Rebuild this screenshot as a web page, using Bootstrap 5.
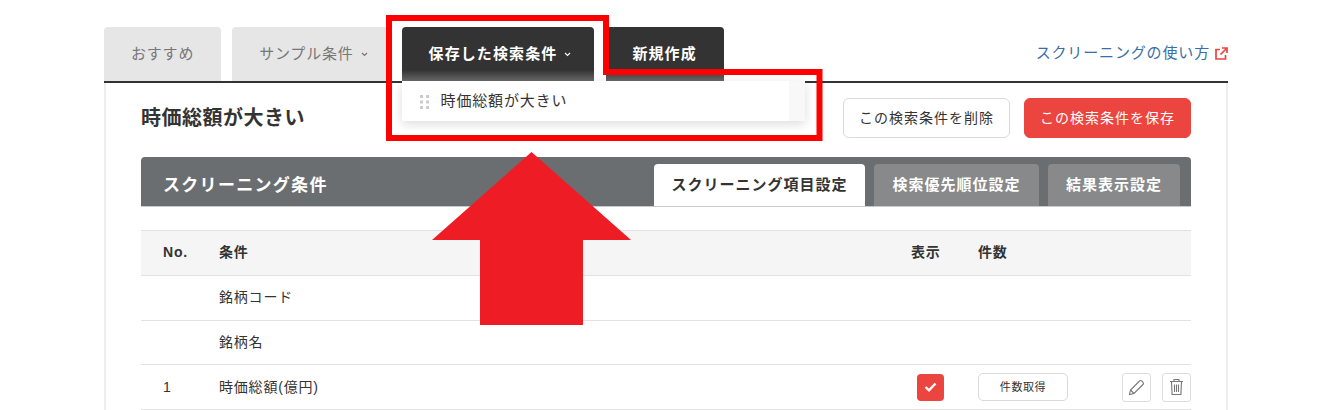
<!DOCTYPE html>
<html lang="ja">

<head>
    <meta charset="UTF-8">
    <meta name="viewport" content="width=device-width, initial-scale=1.0">
    <link href="https://cdn.jsdelivr.net/npm/bootstrap@5.3.3/dist/css/bootstrap.min.css" rel="stylesheet">
    <script src="https://cdn.jsdelivr.net/npm/bootstrap@5.3.3/dist/js/bootstrap.bundle.min.js"></script>
    <title>スクリーニング</title>
    <style>
        html, body {
            height: 410px;
            overflow: hidden;
        }

        body {
            font-family: "Liberation Sans", "Noto Sans CJK JP", sans-serif;
            font-size: 14px;
            color: #333;
            background: #fff;
            position: relative;
        }

        .page-wrap {
            width: 1124px;
            margin-left: 104px;
            padding-top: 27px;
        }

        .main-tabs {
            height: 56px;
            border-bottom: 2px solid #333;
            gap: 11px;
        }

        .main-tab {
            height: 54px;
            padding: 0 27px;
            display: flex;
            align-items: center;
            gap: 7px;
            font-size: 15px;
            letter-spacing: .8px;
            background: #e6e6e6;
            color: #777;
            border-radius: 4px 4px 0 0;
            text-decoration: none;
        }

        .main-tab.has-caret {
            padding-right: 23px;
        }

        .main-tab.is-dark {
            background: linear-gradient(#333 80%, #6a6a6a);
            color: #fff;
            font-weight: 700;
            letter-spacing: 1.100px;
        }

        .main-tab.tab-new {
            margin-left: 1px;
            padding-left: 26px;
        }

        .tab-holder {
            position: relative;
        }

        .saved-menu {
            position: absolute;
            top: 54px;
            left: 0;
            width: 403px;
            height: 40px;
            display: flex;
            z-index: 5;
            background: #f8f8f8;
            box-shadow: 0 3px 10px rgba(0, 0, 0, .14);
        }

        .saved-item {
            width: 387px;
            background: #fff;
            display: flex;
            align-items: center;
            padding: 1px 0 0 18px;
            gap: 12px;
            font-size: 15px;
            letter-spacing: .85px;
        }

        .help-link {
            color: #3a6ea5;
            font-size: 15px;
            letter-spacing: .85px;
            text-decoration: none;
            height: 54px;
            padding-bottom: 1px;
            display: flex;
            align-items: center;
            gap: 4px;
        }

        .content-box {
            border-left: 2px solid #eee;
            border-right: 2px solid #eee;
            height: 327px;
            padding: 15px 35px 0;
        }

        .title-row {
            height: 40px;
            gap: 14px;
        }

        .cond-title {
            font-size: 20px;
            font-weight: 700;
            margin: 0;
            letter-spacing: .5px;
        }

        .act-btn {
            width: 167px;
            height: 40px;
            padding: 0;
            font-size: 14px;
            letter-spacing: 1px;
            border-radius: 6px;
        }

        .btn-outline-del {
            background: #fff;
            border: 1px solid #d9d9d9;
            color: #333;
        }

        .btn-save {
            background: #ec443e;
            border: 1px solid #ec443e;
            color: #fff;
        }

        .cond-bar {
            margin-top: 19px;
            height: 50px;
            background: #6b6e70;
            border-bottom: 1px solid #c9cacb;
            border-radius: 4px 4px 0 0;
            padding: 8px 11px 0 22px;
        }

        .bar-title {
            color: #fff;
            font-size: 17px;
            font-weight: 700;
            letter-spacing: 1.300px;
            margin-bottom: 8px;
        }

        .bar-tabs {
            gap: 9px;
        }

        .bar-tab {
            height: 42px;
            display: flex;
            align-items: center;
            justify-content: center;
            font-size: 15px;
            font-weight: 700;
            letter-spacing: 1px;
            background: #87898b;
            color: #fff;
            border-radius: 4px 4px 0 0;
            text-decoration: none;
        }

        .bar-tab.is-on {
            background: #fff;
            color: #333;
        }

        .cond-table {
            margin: 23px 0 0;
            table-layout: fixed;
            width: 1050px;
            border-top: 1px solid #e2e2e2;
            color: #333;
        }

        .cond-table th,
        .cond-table td {
            height: 44.8px;
            padding: 0;
            vertical-align: middle;
            border-bottom: 1px solid #e2e2e2;
            font-size: 14px;
            letter-spacing: .8px;
        }

        .cond-table th {
            background: #f5f5f5;
            font-weight: 700;
            --bs-table-bg: #f5f5f5;
        }

        .cell-no {
            padding-left: 22px !important;
        }

        .check-box {
            width: 27px;
            height: 27px;
            margin-left: 6px;
            background: #ec443e;
            border-radius: 4px;
            display: flex;
            align-items: center;
            justify-content: center;
        }

        .count-btn {
            width: 90px;
            height: 28px;
            padding: 0;
            font-size: 11px;
            letter-spacing: .6px;
            color: #333;
            background: #fff;
            border: 1px solid #d9d9d9;
            border-radius: 5px;
        }

        .icon-row {
            gap: 11px;
        }

        .icon-btn {
            width: 29px;
            height: 29px;
            padding: 0;
            background: #fff;
            border: 1px solid #ddd;
            border-radius: 3px;
            display: flex;
            align-items: center;
            justify-content: center;
        }

        .mark-layer {
            position: absolute;
            top: 0;
            left: 0;
            z-index: 10;
            pointer-events: none;
        }
    </style>
</head>

<body>
    <div class="page-wrap">
        <div class="main-tabs d-flex align-items-end">
            <a href="#" class="main-tab">おすすめ</a>
            <a href="#" class="main-tab has-caret">サンプル条件
                <svg width="7" height="5" viewBox="0 0 7 5"><path d="M1 1l2.500 2.500L6 1" fill="none" stroke="#777" stroke-width="1.200"/></svg>
            </a>
            <div class="tab-holder">
                <a href="#" class="main-tab is-dark has-caret">保存した検索条件
                    <svg width="7" height="5" viewBox="0 0 7 5"><path d="M1 1l2.500 2.500L6 1" fill="none" stroke="#fff" stroke-width="1.200"/></svg>
                </a>
                <div class="saved-menu">
                    <div class="saved-item">
                        <svg width="9" height="14" viewBox="0 0 9 14" fill="#ccc">
                            <rect x="0" y="0" width="3" height="3"/><rect x="6" y="0" width="3" height="3"/>
                            <rect x="0" y="5.500" width="3" height="3"/><rect x="6" y="5.500" width="3" height="3"/>
                            <rect x="0" y="11" width="3" height="3"/><rect x="6" y="11" width="3" height="3"/>
                        </svg>
                        時価総額が大きい
                    </div>
                </div>
            </div>
            <a href="#" class="main-tab is-dark tab-new">新規作成</a>
            <a href="#" class="help-link ms-auto">スクリーニングの使い方
                <svg width="14" height="14" viewBox="0 0 14 14" fill="none" stroke="#ec443e" stroke-width="1.700">
                    <path d="M6 2.500H2v9.500h9.500V8"/><path d="M8 1h5v5M13 1L6.500 7.500"/>
                </svg>
            </a>
        </div>

        <div class="content-box">
            <div class="title-row d-flex align-items-center">
                <h1 class="cond-title me-auto">時価総額が大きい</h1>
                <button class="btn act-btn btn-outline-del">この検索条件を削除</button>
                <button class="btn act-btn btn-save">この検索条件を保存</button>
            </div>

            <div class="cond-bar d-flex align-items-end">
                <div class="bar-title me-auto">スクリーニング条件</div>
                <div class="bar-tabs d-flex">
                    <a href="#" class="bar-tab is-on" style="width: 211px">スクリーニング項目設定</a>
                    <a href="#" class="bar-tab" style="width: 165px">検索優先順位設定</a>
                    <a href="#" class="bar-tab" style="width: 132px">結果表示設定</a>
                </div>
            </div>

            <table class="table cond-table">
                <colgroup>
                    <col style="width: 78px">
                    <col style="width: 692px">
                    <col style="width: 67px">
                    <col style="width: 144px">
                    <col style="width: 69px">
                </colgroup>
                <thead>
                    <tr>
                        <th class="cell-no">No.</th>
                        <th>条件</th>
                        <th>表示</th>
                        <th>件数</th>
                        <th></th>
                    </tr>
                </thead>
                <tbody>
                    <tr>
                        <td></td>
                        <td>銘柄コード</td>
                        <td></td>
                        <td></td>
                        <td></td>
                    </tr>
                    <tr>
                        <td></td>
                        <td>銘柄名</td>
                        <td></td>
                        <td></td>
                        <td></td>
                    </tr>
                    <tr>
                        <td class="cell-no">1</td>
                        <td>時価総額(億円)</td>
                        <td>
                            <div class="check-box">
                                <svg width="13" height="10" viewBox="0 0 13 10"><path d="M1.500 5l3.500 3.300L11.500 1.500" fill="none" stroke="#fff" stroke-width="2.400"/></svg>
                            </div>
                        </td>
                        <td><button class="btn count-btn">件数取得</button></td>
                        <td>
                            <div class="icon-row d-flex justify-content-end">
                                <button class="btn icon-btn">
                                    <svg width="17" height="17" viewBox="0 0 17 17" fill="none" stroke="#777" stroke-width="1.100">
                                        <path d="M1.500 15.500l1-4.500L11.500 2a1.500 1.500 0 0 1 2.200 0l1.300 1.300a1.500 1.500 0 0 1 0 2.200L6 14.500z"/>
                                        <path d="M2.500 11L6 14.500"/>
                                    </svg>
                                </button>
                                <button class="btn icon-btn">
                                    <svg width="15" height="18" viewBox="0 0 15 18" fill="none" stroke="#777" stroke-width="1.100">
                                        <path d="M1 3.500h13M5 3.500V1.500h5v2M2.500 3.500l.6 13h8.800l.6-13"/>
                                        <path d="M5.500 6.500v7.500M7.500 6.500v7.500M9.500 6.500v7.500"/>
                                    </svg>
                                </button>
                            </div>
                        </td>
                    </tr>
                </tbody>
            </table>
        </div>
    </div>

    <!-- 注釈の赤枠と矢印 -->
    <svg class="mark-layer" width="1340" height="410" viewBox="0 0 1340 410">
        <path d="M389 18H606V72H819.500V138H389Z" fill="none" stroke="#fe0000" stroke-width="6"/>
        <path d="M531.500 152L631 240H583V325H480V240H432Z" fill="#ee1c25"/>
    </svg>
</body>

</html>
